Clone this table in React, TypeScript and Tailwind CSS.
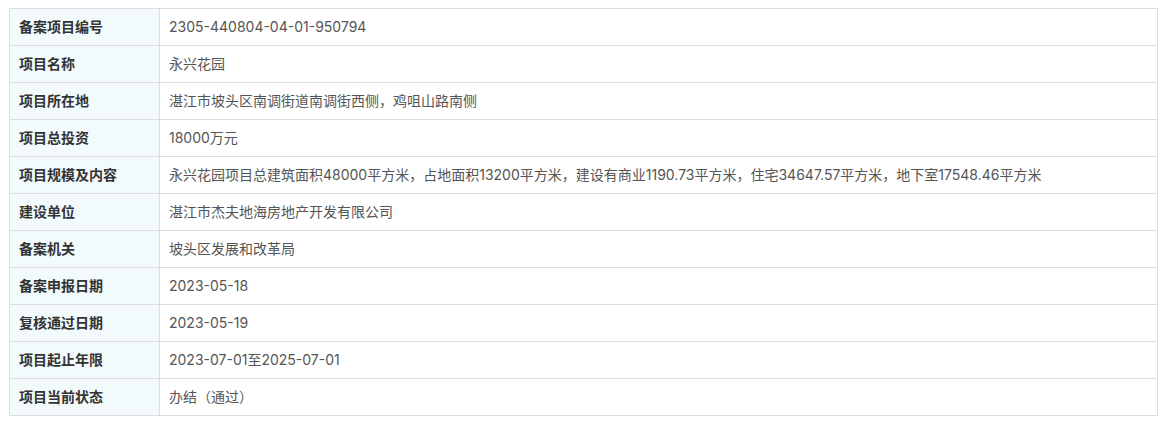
const rows: [string, string][] = [
  ["备案项目编号", "2305-440804-04-01-950794"],
  ["项目名称", "永兴花园"],
  ["项目所在地", "湛江市坡头区南调街道南调街西侧，鸡咀山路南侧"],
  ["项目总投资", "18000万元"],
  [
    "项目规模及内容",
    "永兴花园项目总建筑面积48000平方米，占地面积13200平方米，建设有商业1190.73平方米，住宅34647.57平方米，地下室17548.46平方米",
  ],
  ["建设单位", "湛江市杰夫地海房地产开发有限公司"],
  ["备案机关", "坡头区发展和改革局"],
  ["备案申报日期", "2023-05-18"],
  ["复核通过日期", "2023-05-19"],
  ["项目起止年限", "2023-07-01至2025-07-01"],
  ["项目当前状态", "办结（通过）"],
];

export default function App() {
  return (
    <div className="bg-white pt-[8px] pl-[9px] font-['Inter','Noto_Sans_CJK_SC',sans-serif] text-[14px]">
      <table className="w-[1149px] border-collapse border border-[#dddddd]">
        <tbody>
          {rows.map(([label, value]) => (
            <tr key={label} className="h-[37px]">
              <td className="w-[150px] border border-[#dddddd] bg-[#f2fafb] pb-[2px] pl-[9px] font-bold text-[#333333]">
                {label}
              </td>
              <td className="border border-[#dddddd] pb-[2px] pl-[9px] text-[#555555]">
                {value}
              </td>
            </tr>
          ))}
        </tbody>
      </table>
    </div>
  );
}
